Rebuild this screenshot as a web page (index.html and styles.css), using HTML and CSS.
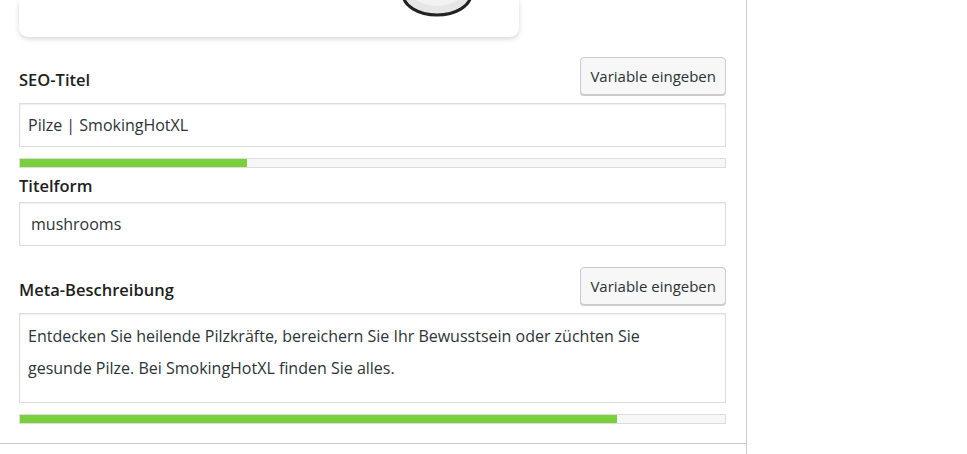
FILE: index.html
```html
<!DOCTYPE html>
<html lang="de">
<head>
    <meta charset="UTF-8">
    <meta name="viewport" content="width=device-width, initial-scale=1.0">
    <title>SEO</title>
    <link rel="stylesheet" href="styles.css">
</head>
<body>
    <div class="metabox">
        <div class="section">
            <div class="preview-card">
                <svg class="plate" width="80" height="20" viewBox="0 0 80 20">
                    <ellipse cx="38" cy="-6" rx="34" ry="21" fill="#e6e6e6" stroke="#222" stroke-width="3"/>
                    <ellipse cx="38" cy="-9" rx="26" ry="15" fill="#f2f2f2"/>
                </svg>
            </div>

            <div class="field-head">
                <label class="field-label">SEO-Titel</label>
                <button class="var-button">Variable eingeben</button>
            </div>
            <div class="field-input">Pilze | SmokingHotXL</div>
            <div class="progress"><div class="progress-fill" style="width: 32.2%"></div></div>

            <div class="field-head plain">
                <label class="field-label">Titelform</label>
            </div>
            <div class="field-input slug">mushrooms</div>

            <div class="field-head spaced">
                <label class="field-label">Meta-Beschreibung</label>
                <button class="var-button">Variable eingeben</button>
            </div>
            <div class="field-textarea">Entdecken Sie heilende Pilzkräfte, bereichern Sie Ihr Bewusstsein oder züchten Sie gesunde Pilze. Bei SmokingHotXL finden Sie alles.</div>
            <div class="progress"><div class="progress-fill" style="width: 84.7%"></div></div>
        </div>
    </div>
</body>
</html>
```

FILE: styles.css
```css
body {
    font-family: "Segoe UI", "Open Sans", sans-serif;
    background-color: #fff;
    color: #1e1e1e;
    margin: 0;
    padding: 0;
}
.metabox {
    width: 747px;
    min-height: 100vh;
    border-right: 1px solid #ccc;
    box-sizing: border-box;
}
.section {
    padding: 0 20px 19px 19px;
    border-bottom: 1px solid #ccc;
}
.preview-card {
    width: 500px;
    height: 37px;
    border-radius: 0 0 9px 9px;
    box-shadow: 0 2px 5px rgba(0, 0, 0, 0.16);
    position: relative;
}
.plate {
    position: absolute;
    left: 380px;
    top: 0;
}
.field-head {
    display: flex;
    justify-content: space-between;
    align-items: flex-end;
    margin-top: 20px;
    margin-bottom: 8px;
}
.field-head.plain {
    margin-top: 6px;
    margin-bottom: 4px;
}
.field-head.spaced {
    margin-top: 21px;
}
.field-label {
    font-size: 16.5px;
    font-weight: 600;
    line-height: 24px;
    margin-bottom: 3px;
}
.plain .field-label {
    margin-bottom: 0;
}
.var-button {
    font-family: inherit;
    font-size: 15px;
    color: #2c3338;
    background-color: #f7f7f7;
    border: 1px solid #ccc;
    border-radius: 4px;
    box-shadow: 0 1px 0 #ccc;
    height: 38px;
    padding: 0 9px;
}
.field-input {
    height: 42px;
    border: 1px solid #ddd;
    box-shadow: inset 0 1px 2px rgba(0, 0, 0, 0.07);
    padding: 0 8px;
    font-size: 16px;
    line-height: 42px;
    color: #2c3338;
}
.field-input.slug {
    padding-left: 11px;
}
.field-textarea {
    height: 76px;
    border: 1px solid #ddd;
    box-shadow: inset 0 1px 2px rgba(0, 0, 0, 0.07);
    padding: 6px 24px 6px 8px;
    font-size: 16px;
    line-height: 32px;
    color: #2c3338;
}
.progress {
    height: 8px;
    margin-top: 11px;
    border: 1px solid #ddd;
    background-color: #f7f7f7;
}
.progress-fill {
    height: 100%;
    background-color: #7ad03a;
}
```
